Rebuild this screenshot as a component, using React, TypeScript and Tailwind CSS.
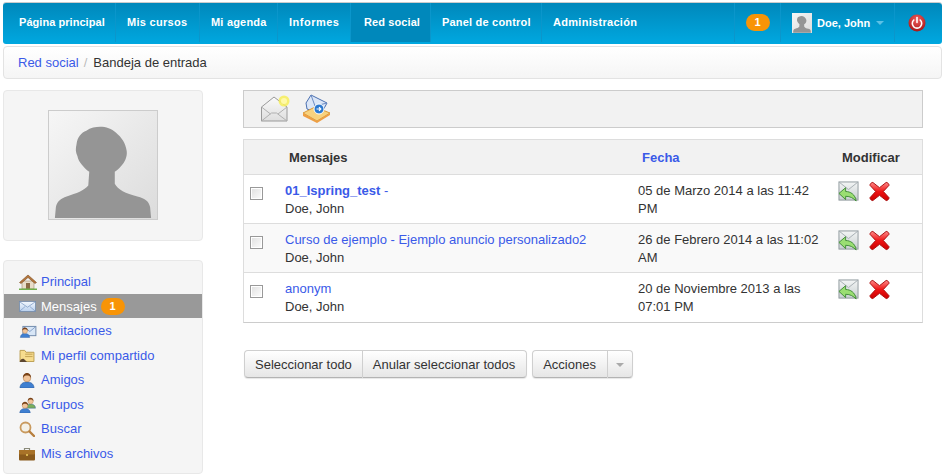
import React from "react";

const Envelope = ({ className = "" }: { className?: string }) => (
  <svg viewBox="0 0 22 16" className={className}>
    <defs>
      <linearGradient id="env" x1="0" y1="0" x2="0" y2="1"><stop offset="0" stopColor="#f4f8fd" /><stop offset="1" stopColor="#b9d0ee" /></linearGradient>
    </defs>
    <rect x="0.5" y="1.5" width="21" height="13" fill="url(#env)" stroke="#7088a8" />
    <path d="M1 2l10 7 10-7M1 14l7-6M21 14l-7-6" fill="none" stroke="#7f9cc4" />
  </svg>
);
const Person = ({ x = 0, y = 0, body = "#3f7fd0", s = 1 }: { x?: number; y?: number; body?: string; s?: number }) => (
  <g transform={`translate(${x} ${y}) scale(${s})`}>
    <path d="M1 16c0-4 3-6 7-6s7 2 7 6z" fill={body} stroke="#2b5c9e" strokeWidth=".6" />
    <circle cx="8" cy="6" r="3.8" fill="#f0c49a" stroke="#a8703f" strokeWidth=".5" />
    <path d="M4 6c-.4-3.5 2-5 4-5s4.400 1.500 4 5c-1-2-2-2.500-4-2.500S5 4 4 6z" fill="#7a4318" />
  </g>
);
const IHome = () => (
  <svg viewBox="0 0 18 16" className="w-[18px] h-4">
    <rect x="3" y="7" width="12" height="8" fill="#e8dcc8" stroke="#9a8a6e" strokeWidth=".6" />
    <path d="M0.500 8.500L9 1l8.500 7.500-1.500 1L9 3.500 2 9.500z" fill="#b5763c" stroke="#7c4d22" strokeWidth=".6" />
    <rect x="7" y="9" width="4" height="6" fill="#8a6a44" />
    <rect x="0" y="14.500" width="18" height="1.500" fill="#6fae4a" />
  </svg>
);
const IMail = () => <Envelope className="w-[17px] h-[13px]" />;
const IInvite = () => (
  <svg viewBox="0 0 18 14" className="w-[18px] h-[13px]">
    <rect x="3.500" y="1.500" width="14" height="10" fill="#d8e6f6" stroke="#6c86a8" />
    <path d="M4 2l7 5 6-5" fill="none" stroke="#7f9cc4" />
    <Person x={0} y={2} s={0.72} />
  </svg>
);
const IFolder = () => (
  <svg viewBox="0 0 16 14" className="w-4 h-[13px]">
    <path d="M.500 3.500V1.500h5l1.500 2h8.500v10H.500z" fill="#f7dc8e" stroke="#b99a4c" />
    <rect x="6" y="5" width="8" height="1.200" fill="#c9a95a" />
    <rect x="6" y="7.500" width="8" height="1.200" fill="#c9a95a" />
    <path d="M0 14c1-3 3-4 5-3l3 3z" fill="#5c4630" />
  </svg>
);
const IFriend = () => <svg viewBox="0 0 16 16" className="w-4 h-4"><Person /></svg>;
const IGroup = () => (
  <svg viewBox="0 0 17 16" className="w-[17px] h-4">
    <Person x={6} y={0} s={0.7} body="#79ad5b" />
    <Person x={0} y={4} s={0.75} />
  </svg>
);
const ISearch = () => (
  <svg viewBox="0 0 16 16" className="w-4 h-4">
    <circle cx="6.500" cy="6.500" r="5" fill="#f4f1e8" stroke="#c99a5e" strokeWidth="1.800" />
    <path d="M10.500 10.500L15 15" stroke="#b77f3e" strokeWidth="2.400" strokeLinecap="round" />
  </svg>
);
const IBriefcase = () => (
  <svg viewBox="0 0 16 14" className="w-4 h-[14px]">
    <path d="M5.500 3V1.500h5V3" fill="none" stroke="#8a8a7a" strokeWidth="1.200" />
    <rect x="0" y="3" width="16" height="10.500" rx="1" fill="#8a5a1c" />
    <rect x="0" y="3" width="16" height="4.500" rx="1" fill="#a87228" />
    <circle cx="8" cy="8" r="1" fill="#f0d060" />
  </svg>
);
const IReply = () => (
  <svg viewBox="0 0 22 22" className="w-[21px] h-[21px] shrink-0">
    <defs>
      <linearGradient id="rp" x1="0" y1="0" x2="0" y2="1"><stop offset="0" stopColor="#f3f5f5" /><stop offset="1" stopColor="#c8cfd0" /></linearGradient>
    </defs>
    <rect x="1" y="1" width="20" height="19" fill="url(#rp)" stroke="#8e989c" />
    <path d="M1 1l10 8 10-8M21 20l-7-7" fill="none" stroke="#a6aeb2" />
    <path d="M1 13l7-6v4c5 0 10 3 11 10-3-3-6-5-11-5v3.500z" fill="#9ade72" stroke="#3f8a37" strokeWidth="1" strokeLinejoin="round" />
  </svg>
);
const IDelete = () => (
  <svg viewBox="0 0 22 22" className="w-[21px] h-[21px] shrink-0">
    <defs>
      <linearGradient id="dl" x1="0" y1="0" x2="0" y2="1"><stop offset="0" stopColor="#ff8a8a" /><stop offset=".5" stopColor="#ee1414" /><stop offset="1" stopColor="#cc0000" /></linearGradient>
    </defs>
    <path d="M4 1.500L11 7l7-5.500c1.500 0 3 1.500 3 3L15 11l6 6.500c0 1.500-1.500 3-3 3L11 15l-7 5.500c-1.500 0-3-1.500-3-3L7 11 1 4.500c0-1.500 1.500-3 3-3z" fill="url(#dl)" stroke="#a80a0a" strokeWidth="1" strokeLinejoin="round" />
  </svg>
);
const Silhouette = ({ className }: { className: string }) => (
  <svg viewBox="0 0 110 110" className={className}>
    <defs>
      <linearGradient id="sil" x1="0" y1="0" x2="1" y2="1"><stop offset="0" stopColor="#f6f6f6" /><stop offset="1" stopColor="#dcdcdc" /></linearGradient>
    </defs>
    <rect width="110" height="110" fill="url(#sil)" />
    <path d="M6 109L7 98C8 92 12 89 18 87C28 84 36 81 40 76L41 62C36 58 30 52 29 46C27 42 27 38 28 34C29 26 33 22 38 20C42 17 48 16 52 16C58 16 64 18 68 22C74 27 78 33 79 40C80 45 78 50 76 53C73 57 70 60 67 62L67 74C70 80 78 84 90 87C98 89 102 92 103 98L104 109Z" fill="#959595" />
  </svg>
);

const navs = [
  { t: "Página principal", w: "w-[113px] pl-[16px] tracking-[0.05px]" },
  { t: "Mis cursos", w: "w-[84px] pl-[11px] tracking-[0.3px]" },
  { t: "Mi agenda", w: "w-[78px] pl-[11px] tracking-[0.2px]" },
  { t: "Informes", w: "w-[73px] pl-[11px] tracking-[0.5px]" },
  { t: "Red social", w: "w-[80px] pl-[13px] tracking-[0.1px] bg-[#0088bb]" },
  { t: "Panel de control", w: "w-[111px] pl-[11px] tracking-[0.2px]" },
  { t: "Administración", w: "w-[193px] pl-[11px] tracking-[0.3px]" },
];

const side = [
  { t: "Principal", I: IHome },
  { t: "Mensajes", I: IMail, active: true },
  { t: "Invitaciones", I: IInvite, extra: "pl-[2px]" },
  { t: "Mi perfil compartido", I: IFolder },
  { t: "Amigos", I: IFriend },
  { t: "Grupos", I: IGroup },
  { t: "Buscar", I: ISearch },
  { t: "Mis archivos", I: IBriefcase },
];

const rows = [
  { s: "01_Ispring_test", b: true, d: "05 de Marzo 2014 a las 11:42 PM", bg: "bg-white" },
  { s: "Curso de ejemplo - Ejemplo anuncio personalizado2", d: "26 de Febrero 2014 a las 11:02 AM", bg: "bg-[#f9f9f9]" },
  { s: "anonym", d: "20 de Noviembre 2013 a las 07:01 PM", bg: "bg-white" },
];

const btn = "h-[28px] pt-[1px] flex items-center bg-gradient-to-b from-white to-[#e6e6e6] border border-[#cfcfcf] border-b-[#b3b3b3] text-[#333]";

export default function App() {
  return (
    <div className="w-[944px] h-[474px] overflow-hidden bg-white text-[13px] leading-[18px] text-[#333] font-['Liberation_Sans',Arial,sans-serif] pt-[3px] px-[3px]">
      <div className="w-[939px] h-[41px] rounded-[3px] bg-gradient-to-b from-[#0088bb] to-[#00a8e0] flex text-white text-[11px] font-bold shadow-[0_-1px_0_#ccc]">
        {navs.map((n, i) => (
          <div key={i} className={`${n.w} h-[39px] pb-[1px] flex items-center border-r border-[#0b96cb]`}>{n.t}</div>
        ))}
        <div className="w-[46px] h-[39px] pb-[1px] flex items-center justify-center border-r border-[#0b96cb]">
          <span className="w-6 h-[17px] rounded-full bg-[#f89406] flex items-center justify-center text-[11px] leading-none">1</span>
        </div>
        <div className="w-[114px] h-[39px] flex items-center pl-[10px] border-r border-[#0b96cb]">
          <Silhouette className="w-[22px] h-[20px] mr-[4px]" />
          <span>Doe, John</span>
          <span className="ml-[6px] w-0 h-0 border-x-[4px] border-x-transparent border-t-[4px] border-t-[#5cc1e6]" />
        </div>
        <div className="flex-1 h-[39px] flex items-center pl-[13px]">
          <svg viewBox="0 0 18 18" className="w-[18px] h-[18px]">
            <defs><radialGradient id="pw" cx=".5" cy=".3" r=".75"><stop offset="0" stopColor="#f06060" /><stop offset="1" stopColor="#a30f0f" /></radialGradient></defs>
            <circle cx="9" cy="9" r="8.500" fill="url(#pw)" />
            <path d="M5.800 6a4.700 4.700 0 1 0 6.400 0" fill="none" stroke="#fff" strokeWidth="1.600" strokeLinecap="round" />
            <path d="M9 3.500v5" stroke="#fff" strokeWidth="1.600" strokeLinecap="round" />
          </svg>
        </div>
      </div>

      <div className="mt-[2px] w-[939px] h-[33px] rounded-[4px] border border-[#e3e3e3] bg-gradient-to-b from-white to-[#f5f5f5] flex items-center pl-[14px]">
        <a className="text-[#3a5ae8]">Red social</a>
        <span className="text-[#bbb] pl-[5px] pr-[6px]">/</span>
        <span>Bandeja de entrada</span>
      </div>

      <div className="flex mt-[11px]">
        <aside className="w-[200px] shrink-0">
          <div className="h-[151px] rounded-[4px] border border-[#e8e8e8] bg-[#f5f5f5] flex justify-center pt-[19px]">
            <div className="w-[110px] h-[110px] border border-[#ccc]">
              <Silhouette className="w-full h-full" />
            </div>
          </div>
          <div className="mt-[19px] h-[214px] rounded-[4px] border border-[#e8e8e8] bg-[#f5f5f5] pt-[8px]">
            {side.map((s, i) => (
              <div key={i} className={`h-[24.500px] pt-[2px] flex items-center pl-[15px] ${s.active ? "bg-[#999] text-white" : "text-[#3a5ae8]"}`}>
                <span className="w-[22px] flex items-center justify-start"><s.I /></span>
                <span className={s.extra}>{s.t}</span>
                {s.active && (
                  <span className="ml-[4px] w-6 h-[17px] rounded-full bg-[#f89406] text-white text-[11px] font-bold flex items-center justify-center leading-none">1</span>
                )}
              </div>
            ))}
          </div>
        </aside>

        <main className="ml-[40px] w-[680px]">
          <div className="h-[38px] bg-[#f2f2f2] border border-[#ccc] flex items-center pl-[16px] gap-[12px]">
            <svg viewBox="0 0 30 30" className="w-[30px] h-[30px]">
              <defs><linearGradient id="e1" x1="0" y1="0" x2="0" y2="1"><stop offset="0" stopColor="#fafafa" /><stop offset="1" stopColor="#dedede" /></linearGradient></defs>
              <path d="M1.500 13L14 3l13 10v14H1.500z" fill="url(#e1)" stroke="#9a9a9a" />
              <path d="M1.500 13l9 7m16.500-7l-9 7M1.500 27l10-8h5l10.500 8" fill="none" stroke="#b0b0b0" />
              <circle cx="24" cy="7" r="5.500" fill="#f7ef5a" opacity=".85" />
              <circle cx="24" cy="7" r="3" fill="#fff9a8" />
            </svg>
            <svg viewBox="0 0 30 30" className="w-[30px] h-[30px]">
              <path d="M4 9L9 1l16 8-6 11-14-5z" fill="#dbe6f7" stroke="#4a6fb0" />
              <path d="M9 1l4 11 12-3" fill="none" stroke="#6c8cc4" />
              <path d="M1 19l12-6 15 6-13 8z" fill="#f8d27e" stroke="#d99a3a" />
              <path d="M1 19v3l14 7 13-8v-2l-13 8z" fill="#ee9f44" />
              <circle cx="17" cy="15" r="5" fill="#2a78cf" stroke="#fff" />
              <path d="M14.500 15h4m-1.500-1.800l1.800 1.800-1.800 1.800" stroke="#fff" strokeWidth="1.200" fill="none" />
            </svg>
          </div>

          <div className="mt-[11px] border border-[#ddd] border-b-[#ccc]">
            <div className="flex h-[35px] pt-[1px] items-center bg-[#f2f2f2] font-bold border-b border-[#ddd]">
              <div className="w-[394px] pl-[45px]">Mensajes</div>
              <div className="w-[204px] pl-[4px] text-[#3a5ae8]">Fecha</div>
              <div>Modificar</div>
            </div>
            {rows.map((r, i) => (
              <div key={i} className={`flex h-[49px] pt-[7px] ${r.bg} ${i < 2 ? "border-b border-[#ddd]" : ""}`}>
                <div className="w-[41px] pl-[6px] pt-[5px]">
                  <div className="w-[13px] h-[13px] border border-[#999] bg-gradient-to-br from-[#e0e0e0] to-[#fdfdfd] shadow-[inset_0_0_0_1px_#fff]" />
                </div>
                <div className="w-[353px]">
                  <div className="text-[#3a5ae8]">
                    {r.b ? <b>{r.s}</b> : r.s}
                    {r.b && " -"}
                  </div>
                  <div>Doe, John</div>
                </div>
                <div className="w-[200px] pr-[10px]">{r.d}</div>
                <div className="flex gap-[10px] -mt-[1px]">
                  <IReply />
                  <IDelete />
                </div>
              </div>
            ))}
          </div>

          <div className="mt-[27px] ml-[1px] flex gap-[5px]">
            <div className="flex shadow-[0_1px_1px_rgba(0,0,0,0.1)] rounded-[4px]">
              <div className={`${btn} rounded-l-[4px] px-[10px]`}>Seleccionar todo</div>
              <div className={`${btn} rounded-r-[4px] border-l-0 pl-[10px] pr-[11px]`}>Anular seleccionar todos</div>
            </div>
            <div className="flex shadow-[0_1px_1px_rgba(0,0,0,0.1)] rounded-[4px]">
              <div className={`${btn} rounded-l-[4px] pl-[10px] pr-[11px]`}>Acciones</div>
              <div className={`${btn} rounded-r-[4px] border-l-0 px-[8px]`}>
                <span className="w-0 h-0 border-x-[4px] border-x-transparent border-t-[4px] border-t-[#aaa]" />
              </div>
            </div>
          </div>
        </main>
      </div>
    </div>
  );
}
